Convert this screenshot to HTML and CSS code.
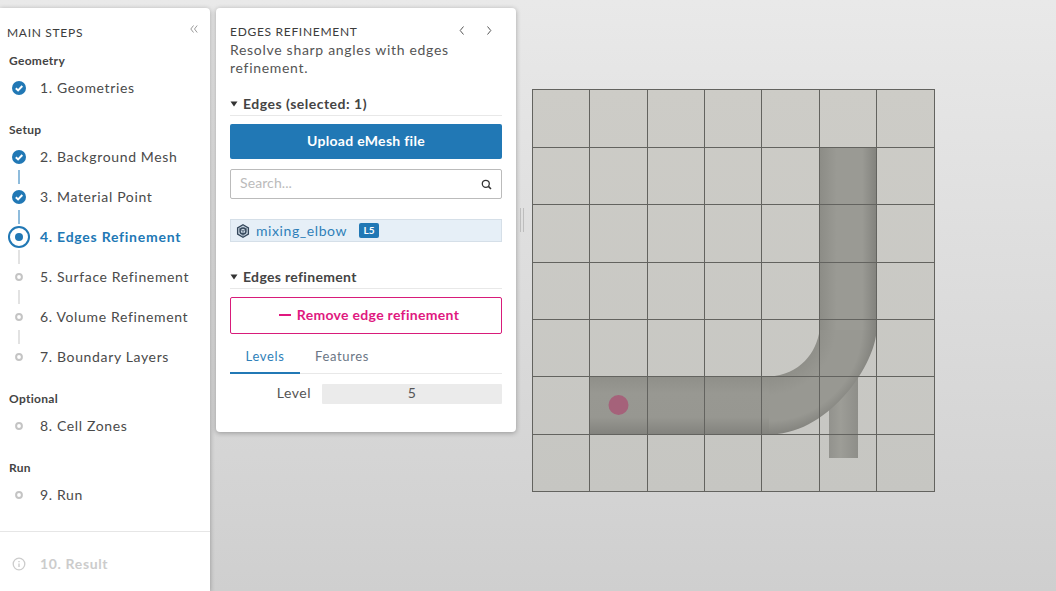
FILE: index.html
```html
<!DOCTYPE html>
<html lang="en">
<head>
  <meta charset="UTF-8" />
  <title>Edges Refinement</title>
  <link rel="stylesheet" href="styles.css">
</head>
<body>
  <svg class="defs" width="0" height="0">
    <symbol id="icon-done" viewBox="0 0 14 14">
      <circle cx="7" cy="7" r="7" fill="#2178b5" />
      <path d="M3.8 7.2 L6.1 9.4 L10.3 5" fill="none" stroke="#fff" stroke-width="2" />
    </symbol>
    <symbol id="icon-todo" viewBox="0 0 8 8">
      <circle cx="4" cy="4" r="2.9" fill="none" stroke="#c4c4c4" stroke-width="2" />
    </symbol>
    <symbol id="icon-caret" viewBox="0 0 8 8">
      <path d="M0.5 1.5 H7.5 L4 6.5 Z" fill="#333" />
    </symbol>
  </svg>

  <aside class="sidebar">
    <div class="sidebar-head">
      <span class="caps">MAIN STEPS</span>
      <svg class="collapse" width="8" height="8" viewBox="0 0 8 8"><path d="M3.5 0.5 L0.8 4 L3.5 7.5 M7.2 0.5 L4.5 4 L7.2 7.5" fill="none" stroke="#999" stroke-width="1" /></svg>
    </div>

    <div class="group-label">Geometry</div>
    <div class="step"><span class="step-icon"><svg width="14" height="14"><use href="#icon-done" /></svg></span>1. Geometries</div>

    <div class="group-label">Setup</div>
    <div class="step"><span class="step-icon"><svg width="14" height="14"><use href="#icon-done" /></svg></span>2. Background Mesh</div>
    <div class="link link-done"></div>
    <div class="step"><span class="step-icon"><svg width="14" height="14"><use href="#icon-done" /></svg></span>3. Material Point</div>
    <div class="link link-done"></div>
    <div class="step step-active"><span class="step-icon"><span class="ring"></span></span>4. Edges Refinement</div>
    <div class="link"></div>
    <div class="step"><span class="step-icon"><svg width="8" height="8"><use href="#icon-todo" /></svg></span>5. Surface Refinement</div>
    <div class="link"></div>
    <div class="step"><span class="step-icon"><svg width="8" height="8"><use href="#icon-todo" /></svg></span>6. Volume Refinement</div>
    <div class="link"></div>
    <div class="step"><span class="step-icon"><svg width="8" height="8"><use href="#icon-todo" /></svg></span>7. Boundary Layers</div>

    <div class="group-label">Optional</div>
    <div class="step"><span class="step-icon"><svg width="8" height="8"><use href="#icon-todo" /></svg></span>8. Cell Zones</div>

    <div class="group-label">Run</div>
    <div class="step"><span class="step-icon"><svg width="8" height="8"><use href="#icon-todo" /></svg></span>9. Run</div>

    <div class="sidebar-foot">
      <div class="step step-disabled">
        <span class="step-icon">
          <svg width="14" height="14" viewBox="0 0 14 14"><circle cx="7" cy="7" r="5.8" fill="none" stroke="#ccc" stroke-width="1.3" /><path d="M7 6.4 V10 M7 4 V5.2" stroke="#ccc" stroke-width="1.4" /></svg>
        </span>10. Result
      </div>
    </div>
  </aside>

  <section class="panel">
    <div class="panel-head">
      <span class="caps">EDGES REFINEMENT</span>
      <span class="panel-nav">
        <svg width="6" height="9" viewBox="0 0 6 9"><path d="M4.5 0.5 L1.2 4.5 L4.5 8.5" fill="none" stroke="#555" stroke-width="1" /></svg>
        <svg width="6" height="9" viewBox="0 0 6 9"><path d="M1.5 0.5 L4.8 4.5 L1.5 8.5" fill="none" stroke="#555" stroke-width="1" /></svg>
      </span>
    </div>
    <p class="panel-desc">Resolve sharp angles with edges refinement.</p>

    <div class="section-title section-edges"><svg width="8" height="8"><use href="#icon-caret" /></svg>Edges (selected: 1)</div>
    <button class="btn-primary" type="button">Upload eMesh file</button>
    <div class="search">
      <span class="search-hint">Search...</span>
      <svg width="11" height="11" viewBox="0 0 11 11"><circle cx="4.8" cy="4.8" r="3.5" fill="none" stroke="#333" stroke-width="1.3" /><path d="M7.4 7.4 L10 10" stroke="#333" stroke-width="1.5" /></svg>
    </div>
    <div class="edge-item">
      <svg width="14" height="14" viewBox="0 0 14 14"><path d="M7 0.8 L12.4 3.9 V10.1 L7 13.2 L1.6 10.1 V3.9 Z" fill="#c9d6e2" stroke="#35485c" stroke-width="1.3" /><circle cx="7" cy="7" r="3" fill="none" stroke="#35485c" stroke-width="1.4" /><path d="M3 4.6 L7 7 L11 4.6 M7 7 V12" stroke="#35485c" stroke-width="0.7" fill="none" /></svg>
      <span class="edge-name">mixing_elbow</span>
      <span class="badge">L5</span>
    </div>

    <div class="section-title section-refine"><svg width="8" height="8"><use href="#icon-caret" /></svg>Edges refinement</div>
    <button class="btn-danger" type="button"><span class="minus"></span>Remove edge refinement</button>
    <div class="tabs">
      <span class="tab tab-active">Levels</span>
      <span class="tab">Features</span>
    </div>
    <div class="field">
      <label>Level</label>
      <div class="field-value">5</div>
    </div>
  </section>

  <div class="handle"></div>

  <main class="viewport">
    <svg width="403" height="403" viewBox="532 89 403 403">
      <defs>
        <linearGradient id="cells" x1="0" y1="0" x2="0" y2="1">
          <stop offset="0" stop-color="#cdccc7" />
          <stop offset="1" stop-color="#c6c6c2" />
        </linearGradient>
        <linearGradient id="pipe-v" x1="0" y1="0" x2="1" y2="0">
          <stop offset="0" stop-color="#8c8c86" />
          <stop offset="0.3" stop-color="#9a9a94" />
          <stop offset="0.75" stop-color="#9a9a94" />
          <stop offset="1" stop-color="#82827d" />
        </linearGradient>
        <linearGradient id="pipe-h" x1="0" y1="0" x2="0" y2="1">
          <stop offset="0" stop-color="#8f8f89" />
          <stop offset="0.3" stop-color="#989892" />
          <stop offset="0.7" stop-color="#979791" />
          <stop offset="1" stop-color="#82827d" />
        </linearGradient>
        <linearGradient id="pipe-small" x1="0" y1="0" x2="1" y2="0">
          <stop offset="0" stop-color="#92928d" />
          <stop offset="0.4" stop-color="#9d9d97" />
          <stop offset="1" stop-color="#8e8e89" />
        </linearGradient>
        <radialGradient id="pipe-bend" gradientUnits="userSpaceOnUse" cx="768" cy="327" r="108">
          <stop offset="0.46" stop-color="#8f8f89" />
          <stop offset="0.63" stop-color="#989892" />
          <stop offset="0.87" stop-color="#989892" />
          <stop offset="1" stop-color="#82827d" />
        </radialGradient>
      </defs>
      <rect x="532" y="89" width="403" height="403" fill="url(#cells)" />
      <rect x="829" y="375" width="29" height="83" fill="url(#pipe-small)" />
      <rect x="819.5" y="147.5" width="57" height="184" fill="url(#pipe-v)" />
      <rect x="589.5" y="376.5" width="184" height="58" fill="url(#pipe-h)" />
      <path d="M819.5 330 C817 352 800 375 769 376.5 L769 434.5 L772 434.5 C832 432 876 362 876.5 330 Z" fill="url(#pipe-bend)" />
      <circle cx="618.5" cy="405" r="10" fill="#a5627a" />
      <path class="grid" d="M532.5 89 V492 M589.5 89 V492 M647.5 89 V492 M704.5 89 V492 M761.5 89 V492 M819.5 89 V492 M876.5 89 V492 M934.5 89 V492 M532 89.5 H935 M532 147.5 H935 M532 204.5 H935 M532 262.5 H935 M532 319.5 H935 M532 376.5 H935 M532 434.5 H935 M532 491.5 H935" />
    </svg>
  </main>
</body>
</html>
```

FILE: styles.css
```css
* {
  box-sizing: border-box;
}
html, body {
  height: 100%;
}
body {
  margin: 0;
  padding-top: 8px;
  display: flex;
  align-items: flex-start;
  overflow: hidden;
  font-family: Lato, "Noto Sans", sans-serif;
  color: #444;
  background: linear-gradient(#e9e9e9, #cfcfcf);
}
.defs {
  position: absolute;
}
.caps {
  font-size: 12px;
  letter-spacing: 0.7px;
  color: #3c3c3c;
}

/* Левая колонка */
.sidebar {
  width: 210px;
  height: 583px;
  flex: none;
  background: #fff;
  border-top-right-radius: 4px;
  box-shadow: 0 1px 5px rgba(0,0,0,0.3);
  display: flex;
  flex-direction: column;
}
.sidebar-head {
  height: 33px;
  padding: 17px 12px 0 7px;
  display: flex;
  justify-content: space-between;
  line-height: 16px;
}
.collapse {
  margin-top: 0;
}
.group-label {
  height: 16px;
  line-height: 16px;
  margin: 21px 0 6px 9px;
  font-size: 12px;
  font-weight: 700;
  letter-spacing: 0.3px;
  color: #444;
}
.sidebar-head + .group-label {
  margin-top: 12px;
}
.step {
  height: 26px;
  display: flex;
  align-items: flex-start;
  line-height: 25px;
  font-size: 14px;
  letter-spacing: 0.65px;
  color: #4a4a4a;
}
.step-icon {
  width: 40px;
  height: 26px;
  flex: none;
  padding-right: 2px;
  display: flex;
  align-items: center;
  justify-content: center;
}
.step-active {
  color: #2178b5;
  font-weight: 700;
  letter-spacing: 0.75px;
}
.step-disabled {
  color: #ccc;
  font-weight: 700;
}
.ring {
  width: 22px;
  height: 22px;
  border: 2px solid #2178b5;
  border-radius: 50%;
  display: flex;
  align-items: center;
  justify-content: center;
}
.ring::after {
  content: "";
  width: 8px;
  height: 8px;
  border-radius: 50%;
  background: #2178b5;
}
.link {
  width: 2px;
  height: 14px;
  margin-left: 18px;
  background: #e2e2e2;
}
.link-done {
  background: #8fbcdc;
}
.sidebar-foot {
  margin-top: 23px;
  padding-top: 19px;
  border-top: 1px solid #e6e6e6;
}

/* Панель шага */
.panel {
  width: 300px;
  height: 424px;
  flex: none;
  margin-left: 6px;
  padding: 14px 14px 0;
  background: #fff;
  border-radius: 4px;
  box-shadow: 0 1px 5px rgba(0,0,0,0.3);
}
.panel-head {
  height: 18px;
  display: flex;
  justify-content: space-between;
  align-items: center;
}
.panel-nav {
  display: flex;
  gap: 21px;
  padding-right: 10px;
  margin-top: -2px;
}
.panel-desc {
  margin: 1px 0 0;
  font-size: 14px;
  line-height: 18px;
  letter-spacing: 0.7px;
  color: #555;
}
.section-title {
  height: 24px;
  display: flex;
  align-items: center;
  gap: 5px;
  padding-left: 0;
  border-bottom: 1px solid #e8e8e8;
  font-size: 14px;
  font-weight: 700;
  color: #444;
}
.section-edges {
  margin-top: 15px;
  letter-spacing: 0.5px;
}
.section-refine {
  margin-top: 23px;
  letter-spacing: 0.32px;
}
.btn-primary {
  display: block;
  width: 100%;
  height: 35px;
  margin-top: 8px;
  padding: 0 0 2px;
  border: none;
  border-radius: 2px;
  background: #2178b5;
  color: #fff;
  font-family: inherit;
  font-size: 14px;
  font-weight: 700;
  letter-spacing: 0.3px;
}
.search {
  height: 30px;
  margin-top: 10px;
  padding: 0 9px;
  border: 1px solid #bbb;
  border-radius: 2px;
  display: flex;
  align-items: center;
  justify-content: space-between;
  font-size: 14px;
  letter-spacing: 0.1px;
  color: #bbb;
}
.search-hint {
  margin-top: -3px;
}
.edge-item {
  height: 23px;
  margin-top: 20px;
  padding-left: 5px;
  display: flex;
  align-items: center;
  background: #e6eff7;
  border: 1px solid #d5dfe8;
}
.edge-name {
  margin-left: 6px;
  font-size: 14px;
  letter-spacing: 0.58px;
  color: #2f7fb9;
}
.badge {
  margin-left: 12px;
  width: 20px;
  height: 15px;
  border-radius: 2px;
  background: #2178b5;
  color: #fff;
  font-size: 10px;
  font-weight: 700;
  line-height: 15px;
  text-align: center;
}
.btn-danger {
  width: 100%;
  height: 37px;
  margin-top: 8px;
  padding: 0 0 2px 6px;
  display: flex;
  align-items: center;
  justify-content: center;
  gap: 6px;
  background: #fff;
  border: 1px solid #d81b7a;
  border-radius: 2px;
  color: #e0187f;
  font-family: inherit;
  font-size: 14px;
  font-weight: 700;
  letter-spacing: 0.3px;
}
.minus {
  width: 12px;
  height: 2px;
  background: #e0187f;
}
.tabs {
  display: flex;
  height: 40px;
  border-bottom: 1px solid #e8e8e8;
}
.tab {
  padding-top: 14px;
  text-align: center;
  font-size: 13px;
  letter-spacing: 0.65px;
  color: #6b7685;
}
.tab-active {
  width: 70px;
  height: 40px;
  color: #2f7fb9;
  border-bottom: 2px solid #2178b5;
}
.tab + .tab {
  margin-left: 15px;
}
.field {
  display: flex;
  align-items: center;
  justify-content: flex-end;
  gap: 11px;
  margin-top: 10px;
  font-size: 14px;
  letter-spacing: 0.5px;
  color: #555;
}
.field label {
  margin-top: -4px;
}
.field-value {
  width: 180px;
  height: 20px;
  line-height: 18px;
  text-align: center;
  background: #ebebeb;
  border-radius: 1px;
}

/* Вьюпорт */
.handle {
  width: 4px;
  height: 24px;
  flex: none;
  margin: 200px 0 0 4px;
  border-left: 1px solid #bdbdbd;
  border-right: 1px solid #bdbdbd;
}
.viewport {
  margin: 81px 0 0 8px;
  line-height: 0;
}
.grid {
  fill: none;
  stroke: #63635f;
  stroke-width: 1;
}
```
